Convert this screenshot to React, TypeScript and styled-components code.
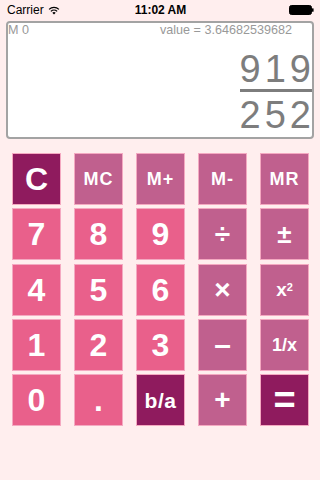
import React from "react";
import styled, { createGlobalStyle } from "styled-components";

const Global = createGlobalStyle`
  html, body { margin: 0; padding: 0; background: #ffeeee; }
  body { font-family: "Liberation Sans", Arial, sans-serif; width: 320px; height: 480px; overflow: hidden; }
`;

const Page = styled.div`
  width: 320px;
  height: 480px;
  background: #ffeeee;
  display: flex;
  flex-direction: column;
`;

const StatusBar = styled.div`
  height: 20px;
  display: grid;
  grid-template-columns: 1fr auto 1fr;
  align-items: center;
  padding: 0 6px 0 7px;
  font-size: 12px;
  color: #000;
`;

const StatusLeft = styled.div`
  display: flex;
  align-items: center;
  gap: 4px;
`;

const Time = styled.div`
  font-weight: bold;
  font-size: 12px;
`;

const StatusRight = styled.div`
  display: flex;
  justify-content: flex-end;
  align-items: center;
`;

const Display = styled.div`
  margin: 1px 6px 0 6px;
  height: 114px;
  background: #fff;
  border: 2px solid #a3a3a3;
  border-radius: 4px;
  display: flex;
  flex-direction: column;
  color: #999;
`;

const DisplayHeader = styled.div`
  display: flex;
  justify-content: space-between;
  font-size: 12.6px;
  line-height: 13px;
  padding: 1px 20px 0 0;
`;

const FractionWrap = styled.div`
  display: flex;
  justify-content: flex-end;
  padding-top: 13px;
`;

const Fraction = styled.div`
  display: flex;
  flex-direction: column;
  align-items: stretch;
  color: #7d7d7d;
`;

const Term = styled.div`
  font-size: 38px;
  line-height: 38px;
  letter-spacing: 4px;
  text-align: right;
  margin-right: -3px;
`;

const Bar = styled.div`
  height: 3px;
  background: #7d7d7d;
  margin: 1px 0 4px 0;
`;

const Keypad = styled.div`
  margin-top: 14px;
  padding: 0 11px 0 12px;
  display: grid;
  grid-template-columns: repeat(5, 49px);
  grid-auto-rows: 52px;
  column-gap: 13px;
  row-gap: 3.25px;
`;

type Kind = "digit" | "op" | "dark";

const colors: Record<Kind, string> = {
  digit: "#e9608b",
  op: "#c0608e",
  dark: "#8f1b5e",
};

const Key = styled.button<{ $kind: Kind; $size: number; $ls?: number }>`
  border: 1px solid #f4a9c1;
  background: ${(p) => colors[p.$kind]};
  color: #fff;
  font-family: "Liberation Sans", Arial, sans-serif;
  font-weight: bold;
  font-size: ${(p) => p.$size}px;
  letter-spacing: ${(p) => p.$ls ?? 0}px;
  padding: 0;
  margin: 0;
  display: flex;
  align-items: center;
  justify-content: center;
  line-height: 1;
`;

const Sup = styled.sup`
  font-size: 11px;
  position: relative;
  top: -2px;
`;

const Wifi = () => (
  <svg width="12" height="9" viewBox="0 0 12 9">
    <path d="M6 8.6 L4.3 6.8 A2.4 2.4 0 0 1 7.7 6.8 Z" fill="#000" />
    <path d="M2.9 5.4 A4.4 4.4 0 0 1 9.1 5.4" stroke="#000" strokeWidth="1.3" fill="none" />
    <path d="M1.1 3.4 A7 7 0 0 1 10.9 3.4" stroke="#000" strokeWidth="1.3" fill="none" />
  </svg>
);

const Battery = () => (
  <svg width="25" height="10" viewBox="0 0 25 10">
    <rect x="0.5" y="0.5" width="22" height="9" rx="2" fill="#000" stroke="#000" />
    <rect x="23" y="3.2" width="1.6" height="3.6" rx="0.6" fill="#000" />
  </svg>
);

const keys: { label: React.ReactNode; kind: Kind; size: number; ls?: number }[] = [
  { label: "C", kind: "dark", size: 32 },
  { label: "MC", kind: "op", size: 18, ls: 1 },
  { label: "M+", kind: "op", size: 18, ls: 1 },
  { label: "M-", kind: "op", size: 18, ls: 1 },
  { label: "MR", kind: "op", size: 18, ls: 1 },
  { label: "7", kind: "digit", size: 32 },
  { label: "8", kind: "digit", size: 32 },
  { label: "9", kind: "digit", size: 32 },
  { label: "÷", kind: "op", size: 28 },
  { label: "±", kind: "op", size: 26 },
  { label: "4", kind: "digit", size: 32 },
  { label: "5", kind: "digit", size: 32 },
  { label: "6", kind: "digit", size: 32 },
  { label: "×", kind: "op", size: 28 },
  { label: (<>x<Sup>2</Sup></>), kind: "op", size: 19 },
  { label: "1", kind: "digit", size: 32 },
  { label: "2", kind: "digit", size: 32 },
  { label: "3", kind: "digit", size: 32 },
  { label: "–", kind: "op", size: 30 },
  { label: "1/x", kind: "op", size: 18 },
  { label: "0", kind: "digit", size: 32 },
  { label: ".", kind: "digit", size: 32 },
  { label: "b/a", kind: "dark", size: 21, ls: 0.5 },
  { label: "+", kind: "op", size: 28 },
  { label: "=", kind: "dark", size: 38 },
];

export default function App() {
  return (
    <Page>
      <Global />
      <StatusBar>
        <StatusLeft>
          <span>Carrier</span>
          <Wifi />
        </StatusLeft>
        <Time>11:02 AM</Time>
        <StatusRight>
          <Battery />
        </StatusRight>
      </StatusBar>
      <Display>
        <DisplayHeader>
          <span>M 0</span>
          <span>value = 3.64682539682</span>
        </DisplayHeader>
        <FractionWrap>
          <Fraction>
            <Term>919</Term>
            <Bar />
            <Term>252</Term>
          </Fraction>
        </FractionWrap>
      </Display>
      <Keypad>
        {keys.map((k, i) => (
          <Key key={i} $kind={k.kind} $size={k.size} $ls={k.ls}>
            {k.label}
          </Key>
        ))}
      </Keypad>
    </Page>
  );
}
